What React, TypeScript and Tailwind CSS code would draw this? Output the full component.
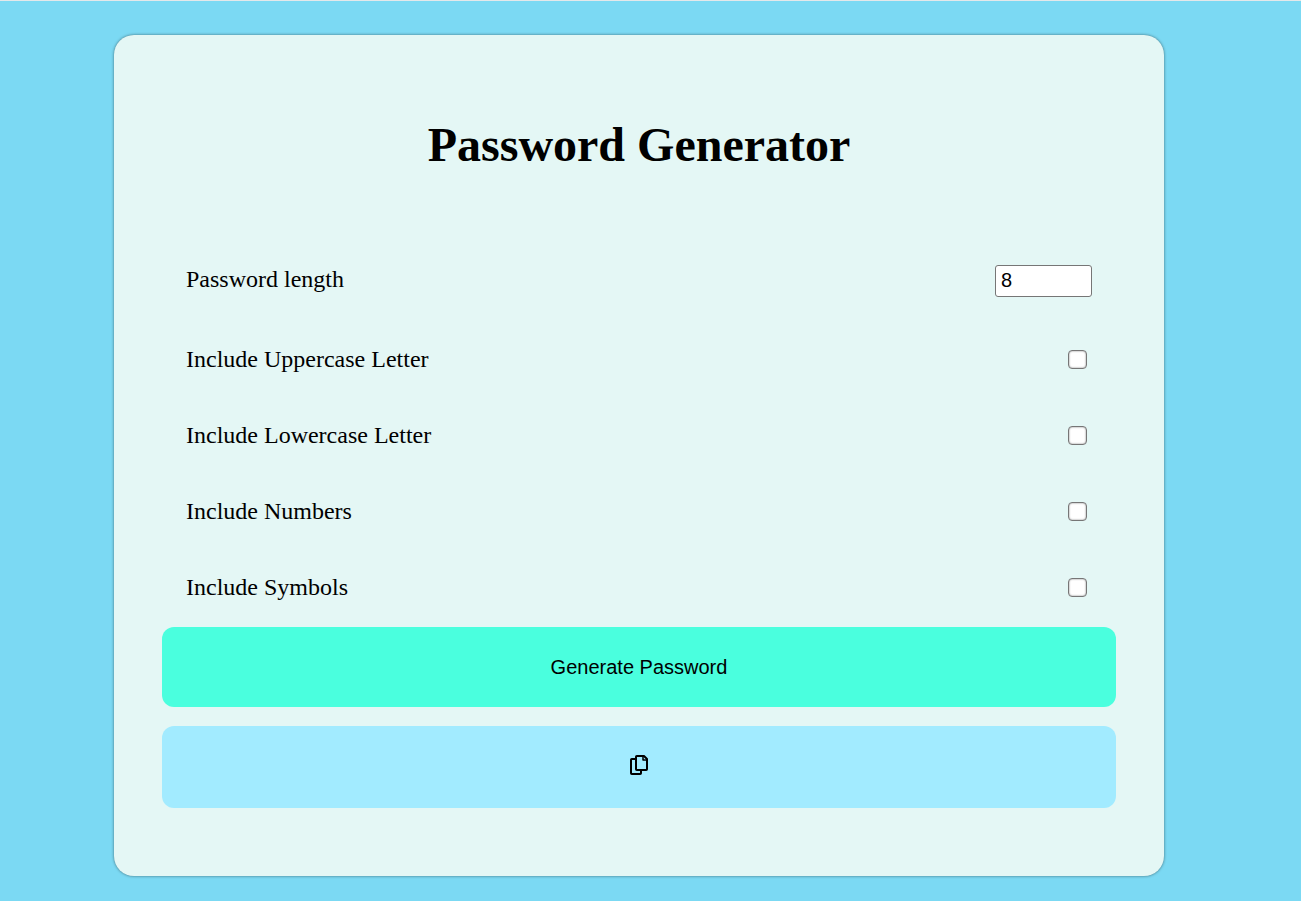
import { useState } from "react";

const options = [
  { id: "uppercase", label: "Include Uppercase Letter" },
  { id: "lowercase", label: "Include Lowercase Letter" },
  { id: "numbers", label: "Include Numbers" },
  { id: "symbols", label: "Include Symbols" },
];

function CopyIcon() {
  return (
    <svg
      width="20"
      height="22"
      viewBox="0 0 20 22"
      fill="none"
      stroke="currentColor"
      strokeWidth="2"
      strokeLinejoin="round"
      aria-hidden="true"
    >
      <path d="M7 5H2.8a.8.8 0 0 0-.8.8V19.200a.8.8 0 0 0 .8.8h8.400a.8.8 0 0 0 .8-.8V16" />
      <path d="M15 2H7.800a.8.8 0 0 0-.8.8V15.200a.8.8 0 0 0 .8.8h9.400a.8.8 0 0 0 .8-.8V5z" />
      <path d="M14 2v4h4" strokeWidth="1.500" />
    </svg>
  );
}

export default function App() {
  const [length, setLength] = useState(8);

  return (
    <div className="min-h-screen border-t border-[#e4e8ea] bg-[#7bd9f3] pt-[34px] pr-[137px] pb-6 pl-[114px] font-['Liberation_Serif',serif] text-black">
      <main className="rounded-[20px] bg-[#e4f7f5] px-12 pt-[82px] pb-[68px] shadow-[0_0_3px_rgba(0,0,0,0.5)]">
        <h1 className="mb-[68px] text-center text-5xl leading-[56px] font-bold">
          Password Generator
        </h1>
        <div className="flex items-center justify-between px-6 py-6">
          <label htmlFor="length" className="pb-1 text-2xl leading-7">
            Password length
          </label>
          <input
            id="length"
            type="number"
            value={length}
            onChange={(e) => setLength(Number(e.target.value))}
            className="h-8 w-[97px] rounded-[3px] border border-[#767676] bg-white px-[5px] pb-0.5 font-['Liberation_Sans',sans-serif] text-xl leading-6"
          />
        </div>
        {options.map((option) => (
          <div key={option.id} className="flex items-center justify-between px-6 py-6">
            <label htmlFor={option.id} className="text-2xl leading-7">
              {option.label}
            </label>
            <input
              id={option.id}
              type="checkbox"
              className="mr-[5px] size-[19px] appearance-none rounded-[4px] border border-[#767676] bg-white shadow-[inset_0_0_2px_#767676] checked:border-[#0075ff] checked:bg-[#0075ff]"
            />
          </div>
        ))}
        <button
          type="button"
          className="mt-0.5 flex h-20 w-full items-center justify-center rounded-xl bg-[#4affde] font-['Liberation_Sans',sans-serif] text-xl"
        >
          Generate Password
        </button>
        <button
          type="button"
          aria-label="Copy password"
          className="mt-[19px] flex h-[82px] w-full items-center justify-center rounded-xl bg-[#a2ebff] pb-1"
        >
          <CopyIcon />
        </button>
      </main>
    </div>
  );
}
